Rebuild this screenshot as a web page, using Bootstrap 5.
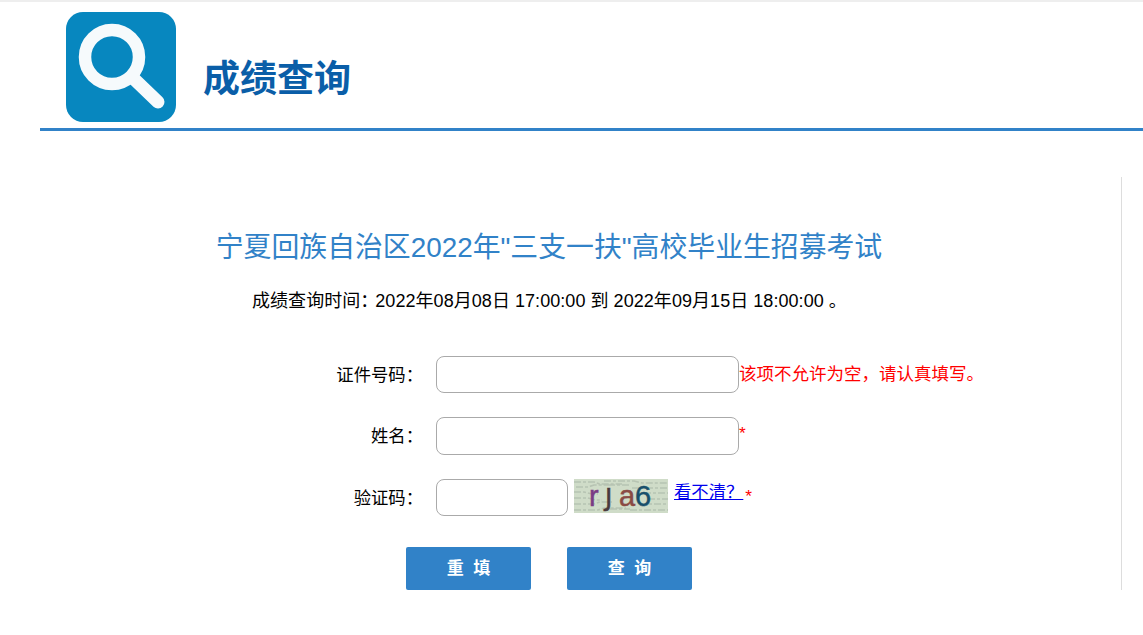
<!DOCTYPE html>
<html lang="zh-CN">
<head>
<meta charset="utf-8">
<title>成绩查询</title>
<link rel="stylesheet" href="https://cdn.jsdelivr.net/npm/bootstrap@5.3.0/dist/css/bootstrap.min.css">
<style>
html,body{height:100%;overflow:hidden}
body{background:#fff;color:#000;font-family:"Liberation Sans","Noto Sans CJK SC",sans-serif;font-size:17.33px;border-top:2px solid #eee}
.hdr{margin-left:40px;border-bottom:3px solid #3182c8;padding:10px 0 0 26px;box-sizing:content-box;height:116px}
.hdr svg{width:110px;height:110px;display:block;flex:none}
.hdr-title{font-size:37px;font-weight:700;color:#0a5ea8;line-height:52px;margin:0 0 0 27px;padding-top:42px}
.panel{margin-top:46px;margin-right:21px;height:413px;border-right:1px solid #ddd;padding-top:52px}
.exam-title{font-size:27.85px;font-weight:400;color:#3182c8;line-height:38px;margin:0;text-align:center;padding-right:23px}
.exam-time{font-size:18px;line-height:26px;padding:21px 0 0 252px;margin:0;white-space:nowrap;letter-spacing:.05px}
.cln{letter-spacing:-3px}
.frm{padding-top:42px}
.frow{display:flex;align-items:flex-start;margin-bottom:24px}
.frm .frow:first-child{margin-bottom:23px}
.lbl{width:423px;flex:none;text-align:right;line-height:38px;margin:0}
.gap-col{width:13px;flex:none}
.inp{width:303px;height:37px;border:1px solid #aaa;border-radius:8px;background:#fff;padding:0 8px;outline:0;flex:none}
.inp-t{height:38px}
.inp-s{width:132px}
.err{color:#f00;line-height:36px;font-size:17.5px}
.star{color:#f00;line-height:32px}
.star-b{line-height:34px;margin-left:2px}
.capt{width:94px;height:34px;margin:0 6px;flex:none;display:block}
.capt text{font-family:"Liberation Sans",sans-serif;font-size:29px;stroke-width:.5}
.capt .cj{font-family:"DejaVu Sans",sans-serif;font-size:25px}
.refresh{color:#00e;text-decoration:underline;line-height:26px}
.btns{display:flex;gap:36px;padding-left:406px;padding-top:6px}
.go{width:125px;height:43px;background:#3182c8;color:#fff;border:0;border-radius:2px;font-size:17px;font-weight:700;padding:0}
</style>
</head>
<body>
<header class="hdr d-flex align-items-start">
  <svg viewBox="0 0 110 110" role="img" aria-label="搜索">
    <rect width="110" height="110" rx="17" fill="#0787bf"/>
    <circle cx="46" cy="45" r="27" fill="none" stroke="#f6fafc" stroke-width="12.5"/>
    <path d="M66 65 L92 90" stroke="#f6fafc" stroke-width="13" stroke-linecap="round"/>
  </svg>
  <h1 class="hdr-title">成绩查询</h1>
</header>
<main class="panel">
  <h2 class="exam-title">宁夏回族自治区2022年"三支一扶"高校毕业生招募考试</h2>
  <p class="exam-time">成绩查询时间<span class="cln">：</span>2022年08月08日 17:00:00 到 2022年09月15日 18:00:00 。</p>
  <form class="frm" onsubmit="return false">
    <div class="frow">
      <label class="lbl" for="a">证件号码：</label><span class="gap-col"></span>
      <input class="inp" id="a" type="text"><span class="err">该项不允许为空，请认真填写。</span>
    </div>
    <div class="frow">
      <label class="lbl" for="b">姓名：</label><span class="gap-col"></span>
      <input class="inp inp-t" id="b" type="text"><span class="star">*</span>
    </div>
    <div class="frow">
      <label class="lbl" for="c">验证码：</label><span class="gap-col"></span>
      <input class="inp inp-s" id="c" type="text">
      <svg class="capt" viewBox="0 0 94 34" role="img" aria-label="验证码图片">
        <rect width="94" height="34" fill="#cfdcc8"/>
        <path d="M0 3h20l6 2h22M30 2h30l8 2h26M2 8h12l6-2h14M58 9h36M0 13h10l8 2h6M70 14h24M0 19h14l8 2h6M74 20h20M0 25h20l6-2h12M66 25h28M0 31h24l6-2h22M56 31h38M34 6h22M36 30h20" stroke="#b7c3b2" stroke-width="1.6" stroke-dasharray="7 2 3 2" fill="none"/>
        <text x="15" y="27" fill="#7a3b84" stroke="#7a3b84">r</text>
        <text class="cj" x="31" y="27" fill="#4a3a3c" stroke="#4a3a3c">J</text>
        <text x="45" y="27" fill="#8a4a44" stroke="#8a4a44">a</text>
        <text x="61" y="27" fill="#174f6b" stroke="#174f6b">6</text>
      </svg>
      <a class="refresh" href="#">看不清？</a><span class="star star-b">*</span>
    </div>
    <div class="btns">
      <button class="go" type="reset">重&nbsp;&nbsp;填</button>
      <button class="go" type="submit">查&nbsp;&nbsp;询</button>
    </div>
  </form>
</main>
</body>
</html>
